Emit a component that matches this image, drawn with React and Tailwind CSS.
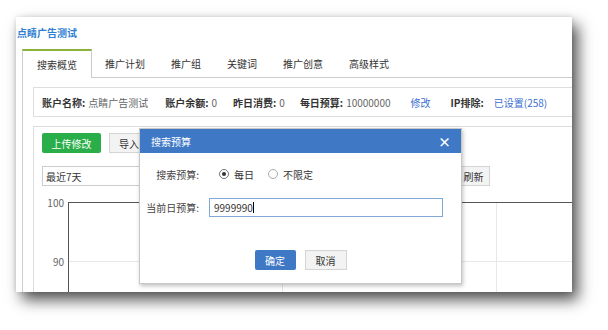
import React from 'react';

const font = "font-['Noto_Sans_CJK_SC','Microsoft_YaHei',sans-serif]";

function Tab({ label, active }) {
  if (active) {
    return (
      <div className="h-[29px] px-[14px] flex items-center bg-white border-t-2 border-x border-t-[#8bb33a] border-x-[#ccc] -mb-px text-[#333]">
        {label}
      </div>
    );
  }
  return <div className="h-[28px] px-[13px] flex items-center text-[#333]">{label}</div>;
}

function Info({ label, value, className, valueClass }) {
  return (
    <span className={'flex items-center ' + (className || '')}>
      <span className="font-bold text-[#333]">{label}</span>
      <span className={valueClass || 'text-[#666] ml-[3px]'}>{value}</span>
    </span>
  );
}

function Radio({ checked }) {
  return (
    <span className={'w-[10px] h-[10px] rounded-full border flex items-center justify-center ' + (checked ? 'border-[#777]' : 'border-[#aaa]')}>
      {checked && <span className="w-[4px] h-[4px] rounded-full bg-[#333]" />}
    </span>
  );
}

function BudgetDialog() {
  return (
    <div className="absolute left-[123px] top-[111px] w-[323px] h-[156px] bg-white border border-[#c8c8c8] shadow-[1px_2px_4px_rgba(0,0,0,0.25)] flex flex-col">
      <div className="h-[24px] bg-[#3f79c6] flex items-center justify-between pl-[11px] pr-[10px] text-white">
        <span>搜索预算</span>
        <span className="text-[13px] leading-none font-bold">×</span>
      </div>
      <div className="flex items-center h-[14px] mt-[14px]">
        <span className="w-[59px] text-right text-[#444]">搜索预算:</span>
        <span className="ml-[20px] flex items-center gap-[5px]">
          <Radio checked />
          <span className="text-[#333]">每日</span>
        </span>
        <span className="ml-[14px] flex items-center gap-[5px]">
          <Radio />
          <span className="text-[#333]">不限定</span>
        </span>
      </div>
      <div className="flex items-center mt-[17px]">
        <span className="w-[59px] text-right text-[#444]">当前日预算:</span>
        <div className="ml-[10px] w-[234px] h-[19px] border border-[#7fa9d4] flex items-center pl-[4px] text-[#333]">
          9999990<span className="w-px h-[11px] bg-black" />
        </div>
      </div>
      <div className="flex justify-center gap-[9px] mt-[33px]">
        <div className="w-[41px] h-[20px] bg-[#3f79c6] rounded-[2px] text-white flex items-center justify-center">确定</div>
        <div className="w-[42px] h-[20px] bg-[#f3f3f3] border border-[#d4d4d4] text-[#333] flex items-center justify-center">取消</div>
      </div>
    </div>
  );
}

function Chart() {
  return (
    <div className="flex mt-[16px] flex-1">
      <div className="w-[22px] flex flex-col items-end text-[#666]">
        <span className="h-[14px] leading-[14px] -mt-[6px]">100</span>
        <span className="h-[14px] leading-[14px] mt-[45px]">90</span>
      </div>
      <div className="ml-[4px] flex-1 border-l border-t border-[#555] flex flex-col">
        <div className="h-[59px] flex border-b border-[#e8e8e8]">
          <div className="w-[214px] border-r border-[#e8e8e8]" />
          <div className="w-[214px] border-r border-[#e8e8e8]" />
        </div>
        <div className="flex-1 flex">
          <div className="w-[214px] border-r border-[#e8e8e8]" />
          <div className="w-[214px] border-r border-[#e8e8e8]" />
        </div>
      </div>
    </div>
  );
}

export default function App() {
  return (
    <div className={'w-[608px] h-[330px] bg-white pl-[16px] pt-[17px] text-[10px] ' + font}>
      <div className="relative w-[556px] h-[275px] bg-white overflow-hidden flex flex-col shadow-[6px_8px_14px_rgba(0,0,0,0.68),0_0_5px_rgba(0,0,0,0.12)]">
        <div className="pt-[9px] pl-[1px] leading-[14px] font-bold text-[#2f7fd2]">点睛广告测试</div>

        <div className="ml-[6px] mt-[9px] flex items-end border-b border-[#ccc]">
          <Tab label="搜索概览" active />
          <Tab label="推广计划" />
          <Tab label="推广组" />
          <Tab label="关键词" />
          <Tab label="推广创意" />
          <Tab label="高级样式" />
        </div>

        <div className="ml-[6px] flex-1 border-l border-[#ccc] pl-[10px] pt-[9px] flex flex-col">
          <div className="h-[30px] border border-r-0 border-[#ddd] pl-[8px] flex items-center">
            <Info label="账户名称:" value="点睛广告测试" />
            <Info label="账户余额:" value="0" className="ml-[17px]" />
            <Info label="昨日消费:" value="0" className="ml-[16px]" />
            <Info label="每日预算:" value="10000000" className="ml-[15px]" />
            <span className="ml-[20px] text-[#3b6fd1]">修改</span>
            <Info label="IP排除:" value="已设置(258)" className="ml-[20px]" valueClass="ml-[10px] text-[#3b6fd1]" />
          </div>

          <div className="mt-[9px] flex-1 border-t border-l border-[#ddd] pl-[8px] pt-[6px] flex flex-col">
            <div className="flex items-center">
              <div className="w-[59px] h-[20px] bg-[#2aae4a] rounded-[2px] text-white flex items-center justify-center">上传修改</div>
              <div className="ml-[8px] w-[40px] h-[20px] bg-[#f3f3f3] border border-[#d4d4d4] text-[#333] flex items-center justify-center">导入</div>
            </div>
            <div className="flex items-center mt-[13px]">
              <div className="w-[120px] h-[20px] border border-[#ccc] flex items-center pl-[3px] text-[#333]">最近7天</div>
              <div className="ml-[295px] w-[33px] h-[20px] bg-[#f3f3f3] border border-[#d4d4d4] text-[#333] flex items-center justify-center">刷新</div>
            </div>
            <Chart />
          </div>
        </div>

        <BudgetDialog />
      </div>
    </div>
  );
}
